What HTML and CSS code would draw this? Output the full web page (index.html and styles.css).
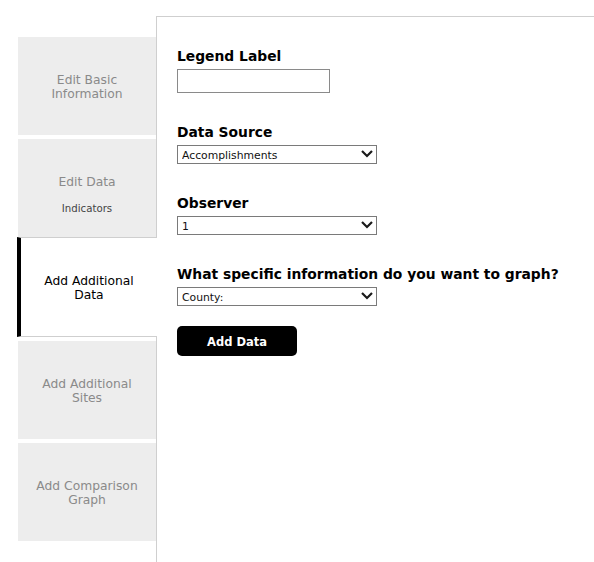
FILE: index.html
```html
<!DOCTYPE html>
<html lang="en">
<head>
<meta charset="utf-8">
<title>Add Additional Data</title>
<link rel="stylesheet" href="styles.css">
</head>
<body>
<div class="page">
  <nav class="tabs">
    <div class="tab"><span class="tab-label">Edit Basic<br>Information</span></div>
    <div class="tab"><span class="tab-label">Edit Data</span><span class="tab-sub">Indicators</span></div>
    <div class="tab tab-active"><span class="tab-label">Add Additional<br>Data</span></div>
    <div class="tab"><span class="tab-label">Add Additional<br>Sites</span></div>
    <div class="tab"><span class="tab-label">Add Comparison<br>Graph</span></div>
  </nav>
  <main class="panel">
    <div class="field">
      <label class="field-label" for="legend">Legend Label</label>
      <input class="text-input" id="legend" type="text">
    </div>
    <div class="field">
      <label class="field-label" for="source">Data Source</label>
      <div class="select-wrap">
        <select class="select" id="source"><option>Accomplishments</option></select>
        <svg class="chevron" width="12" height="8" viewBox="0 0 12 8"><polyline points="1,1 6,6 11,1" fill="none" stroke="#1a1a1a" stroke-width="2.2"/></svg>
      </div>
    </div>
    <div class="field">
      <label class="field-label" for="observer">Observer</label>
      <div class="select-wrap">
        <select class="select" id="observer"><option>1</option></select>
        <svg class="chevron" width="12" height="8" viewBox="0 0 12 8"><polyline points="1,1 6,6 11,1" fill="none" stroke="#1a1a1a" stroke-width="2.2"/></svg>
      </div>
    </div>
    <div class="field field-last">
      <label class="field-label" for="info">What specific information do you want to graph?</label>
      <div class="select-wrap">
        <select class="select" id="info"><option>County:</option></select>
        <svg class="chevron" width="12" height="8" viewBox="0 0 12 8"><polyline points="1,1 6,6 11,1" fill="none" stroke="#1a1a1a" stroke-width="2.2"/></svg>
      </div>
    </div>
    <button class="btn" type="button">Add Data</button>
  </main>
</div>
</body>
</html>
```
FILE: styles.css
```css
html, body {
  margin: 0;
  padding: 0;
  background: #fff;
}
body {
  font-family: "DejaVu Sans", Verdana, sans-serif;
  color: #000;
}
.page {
  display: flex;
  align-items: stretch;
  box-sizing: border-box;
  min-height: 562px;
  padding: 16px 0 0 18px;
}
.tabs {
  width: 138px;
  flex: none;
  margin-top: 21px;
  display: flex;
  flex-direction: column;
}
.tab {
  box-sizing: border-box;
  height: 98px;
  margin-bottom: 4px;
  padding-top: 36px;
  background: #ededed;
  color: #8a8a8a;
  text-align: center;
  display: flex;
  flex-direction: column;
  align-items: center;
}
.tab-label {
  display: block;
  font-size: 12.3px;
  line-height: 14px;
}
.tab-sub {
  display: block;
  margin-top: 14px;
  font-size: 10.2px;
  line-height: 12px;
  color: #444;
}
.tab-active {
  position: relative;
  height: 100px;
  margin-top: -4px;
  margin-left: -1px;
  margin-right: -1px;
  background: #fff;
  color: #000;
  border-left: 4px solid #000;
  border-top: 1px solid #cfcfcf;
  border-bottom: 1px solid #cfcfcf;
}
.panel {
  flex: 1;
  border-top: 1px solid #cfcfcf;
  border-left: 1px solid #cfcfcf;
  padding: 31px 20px 0 20px;
}
.field {
  margin-bottom: 31px;
}
.field-last {
  margin-bottom: 20px;
}
.field-label {
  display: block;
  font-size: 13.85px;
  font-weight: bold;
  line-height: 17px;
  margin-bottom: 4px;
  white-space: nowrap;
}
.text-input {
  display: block;
  box-sizing: border-box;
  width: 153px;
  height: 24px;
  margin: 0;
  padding: 0 4px;
  border: 1px solid #8a8a8a;
  background: #fff;
}
.select-wrap {
  position: relative;
  width: 200px;
  height: 19px;
}
.select {
  display: block;
  box-sizing: border-box;
  width: 200px;
  height: 19px;
  margin: 0;
  padding: 1px 20px 0 4px;
  border: 1px solid #7a7a7a;
  border-radius: 0;
  background: #fff;
  color: #111;
  font-family: "DejaVu Sans", Verdana, sans-serif;
  font-size: 10.8px;
  -webkit-appearance: none;
  appearance: none;
}
.chevron {
  position: absolute;
  right: 4px;
  top: 5px;
  pointer-events: none;
}
.btn {
  display: block;
  width: 120px;
  height: 30px;
  margin: 0;
  padding: 1px 0 0;
  border: none;
  border-radius: 5px;
  background: #000;
  color: #fff;
  font-family: "DejaVu Sans", Verdana, sans-serif;
  font-size: 11.5px;
  font-weight: bold;
}
```
